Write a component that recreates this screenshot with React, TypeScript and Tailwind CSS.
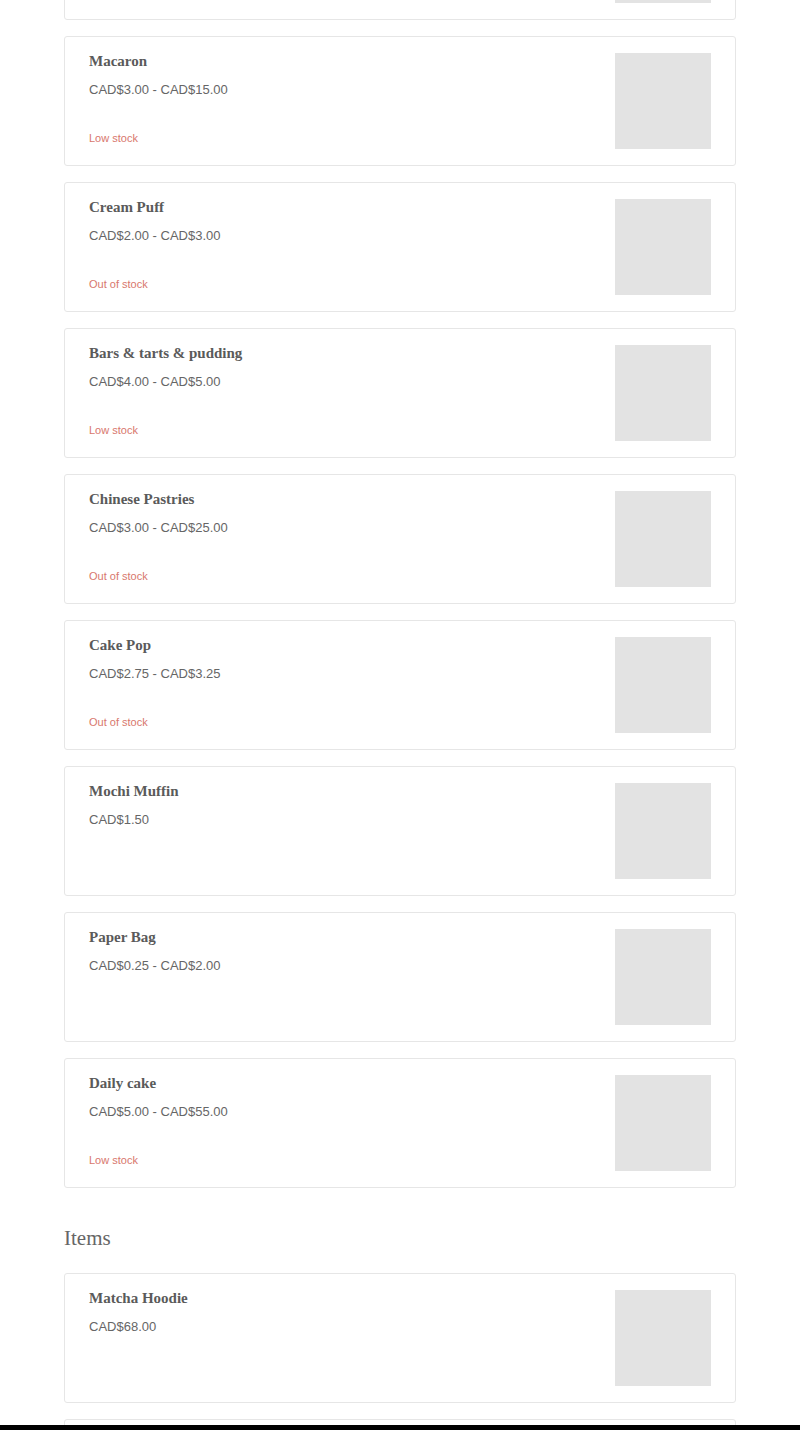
type Product = {
  name: string;
  price: string;
  stock?: "Low stock" | "Out of stock";
};

const cakes: Product[] = [
  { name: "Tiramisu", price: "CAD$4.00 - CAD$30.00", stock: "Low stock" },
  { name: "Macaron", price: "CAD$3.00 - CAD$15.00", stock: "Low stock" },
  { name: "Cream Puff", price: "CAD$2.00 - CAD$3.00", stock: "Out of stock" },
  { name: "Bars & tarts & pudding", price: "CAD$4.00 - CAD$5.00", stock: "Low stock" },
  { name: "Chinese Pastries", price: "CAD$3.00 - CAD$25.00", stock: "Out of stock" },
  { name: "Cake Pop", price: "CAD$2.75 - CAD$3.25", stock: "Out of stock" },
  { name: "Mochi Muffin", price: "CAD$1.50" },
  { name: "Paper Bag", price: "CAD$0.25 - CAD$2.00" },
  { name: "Daily cake", price: "CAD$5.00 - CAD$55.00", stock: "Low stock" },
];

const items: Product[] = [
  { name: "Matcha Hoodie", price: "CAD$68.00" },
  { name: "Matcha Tote", price: "CAD$25.00" },
];

function ProductCard({ product }: { product: Product }) {
  return (
    <div className="flex h-[130px] items-start justify-between rounded-[3px] border border-[#e6e6e6] bg-white px-6 pt-[14px]">
      <div className="flex flex-col">
        <p className="font-['Liberation_Serif',serif] text-[15px] font-bold leading-[20px] text-[#5a5a5a]">
          {product.name}
        </p>
        <p className="mt-[9px] font-['Liberation_Sans',sans-serif] text-[13px] leading-[20px] text-[#666]">
          {product.price}
        </p>
        {product.stock && (
          <p className="mt-[30px] font-['Liberation_Sans',sans-serif] text-[11px] leading-[16px] text-[#d8776d]">
            {product.stock}
          </p>
        )}
      </div>
      <div className="mt-[2px] h-24 w-24 shrink-0 bg-[#e3e3e3]" />
    </div>
  );
}

export default function App() {
  return (
    <div className="h-[1430px] overflow-hidden bg-white">
      <div className="mx-auto -mt-[110px] w-[672px]">
        <div className="flex flex-col gap-4">
          {cakes.map((p) => (
            <ProductCard key={p.name} product={p} />
          ))}
        </div>

        <h2 className="mt-[36px] mb-[21px] font-['Liberation_Serif',serif] text-[21px] leading-[28px] text-[#666]">
          Items
        </h2>

        <div className="flex flex-col gap-4">
          {items.map((p) => (
            <ProductCard key={p.name} product={p} />
          ))}
        </div>
      </div>
      <div className="fixed inset-x-0 bottom-0 h-[5px] bg-black" />
    </div>
  );
}
